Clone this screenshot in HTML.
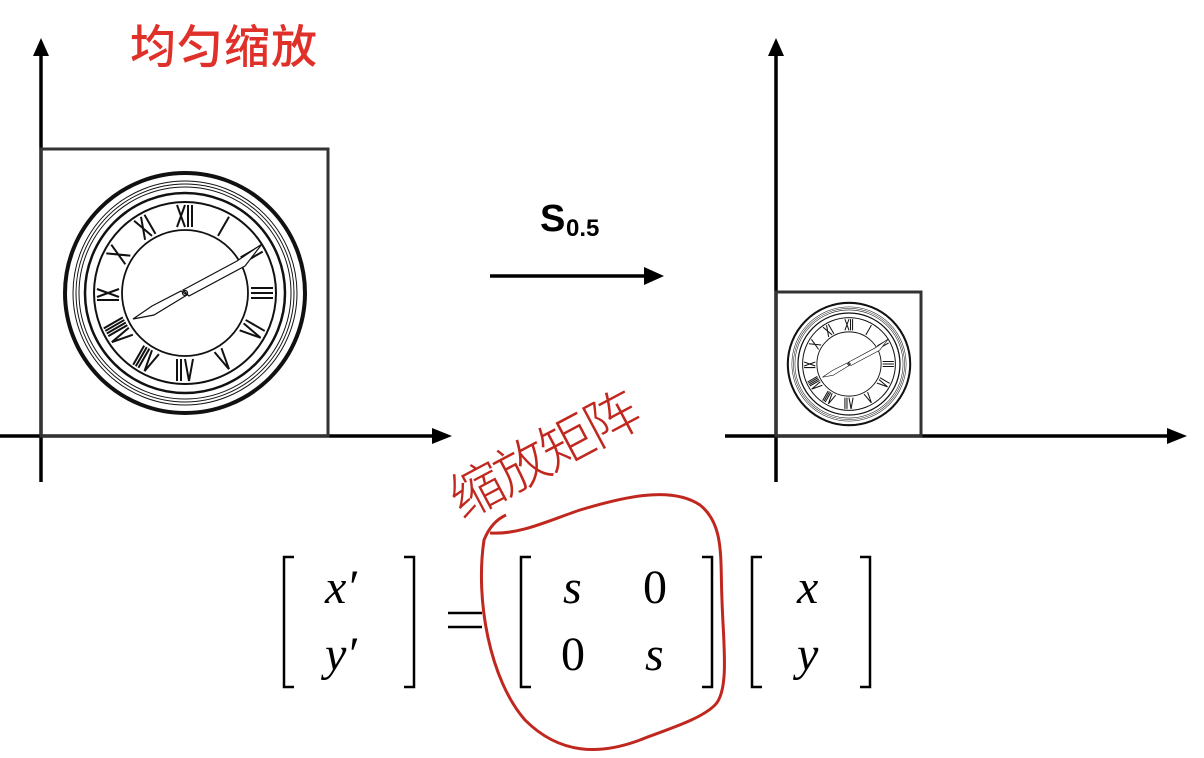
<!DOCTYPE html>
<html><head><meta charset="utf-8"><style>
html,body{margin:0;padding:0;background:#fff;width:1204px;height:758px;overflow:hidden}
svg{display:block}
</style></head><body>
<svg width="1204" height="758" viewBox="0 0 1204 758" xmlns="http://www.w3.org/2000/svg">
<defs>
<g id="clock" fill="none" stroke="#111">
<circle r="120" stroke-width="4"/>
<circle r="112" stroke-width="1"/>
<circle r="109" stroke-width="1"/>
<circle r="106" stroke-width="1"/>
<circle r="100" stroke-width="2.5"/>
<circle r="91" stroke-width="2"/>
<circle r="63" stroke-width="1.8"/>
<g stroke-width="2">
<g transform="rotate(0)"><path d="M-8,-66L0,-88M0,-66L-8,-88M3,-66L3,-88M7,-66L7,-88"/></g>
<g transform="rotate(30)"><path d="M0,-66L0,-88"/></g>
<g transform="rotate(60)"><path d="M-3,-66L-3,-88M3,-66L3,-88"/></g>
<g transform="rotate(90)"><path d="M-5,-66L-5,-88M0,-66L0,-88M5,-66L5,-88"/></g>
<g transform="rotate(120)"><path d="M-7,-66L-7,-88M-3,-66L1,-88M5,-66L1,-88"/></g>
<g transform="rotate(150)"><path d="M-4,-66L0,-88M4,-66L0,-88"/></g>
<g transform="rotate(180)"><path d="M-8,-66L-4,-88M0,-66L-4,-88M4,-66L4,-88M8,-66L8,-88"/></g>
<g transform="rotate(210)"><path d="M-8,-66L-4,-88M0,-66L-4,-88M3,-66L3,-88M6,-66L6,-88M9,-66L9,-88"/></g>
<g transform="rotate(240)"><path d="M-10,-66L-6,-88M-2,-66L-6,-88M1,-66L1,-88M4,-66L4,-88M7,-66L7,-88M10,-66L10,-88"/></g>
<g transform="rotate(270)"><path d="M-7,-66L-7,-88M-4,-66L4,-88M4,-66L-4,-88"/></g>
<g transform="rotate(300)"><path d="M-5,-66L5,-88M5,-66L-5,-88"/></g>
<g transform="rotate(330)"><path d="M-8,-66L0,-88M0,-66L-8,-88M4,-66L4,-88"/></g>
</g>
<path d="M-52,26 L-33,13 L-4,-2 L2,2 L-31,22 Z" stroke-width="1.2" fill="#fff"/>
<path d="M-2,-3 L52,-32 L77,-49 L60,-27 L4,3 Z" stroke-width="1.2" fill="#fff"/>
<circle r="2.5" stroke-width="1.2"/>
</g>
</defs>
<g stroke="#000" stroke-width="3.5" fill="none">
<line x1="41" y1="52" x2="41" y2="482"/>
<line x1="0" y1="436" x2="436" y2="436"/>
<line x1="776" y1="52" x2="776" y2="482"/>
<line x1="725" y1="436" x2="1172" y2="436"/>
<line x1="490" y1="276" x2="648" y2="276"/>
</g>
<g fill="#000">
<polygon points="41,38 33,56 49,56"/>
<polygon points="452,436 432,428 432,444"/>
<polygon points="776,38 768,56 784,56"/>
<polygon points="1187,436 1167,428 1167,444"/>
<polygon points="664,276 644,267 644,285"/>
</g>
<rect x="41" y="149" width="287" height="287" fill="none" stroke="#333" stroke-width="3"/>
<rect x="776" y="292" width="145" height="144" fill="none" stroke="#333" stroke-width="3"/>
<use href="#clock" transform="translate(185,293)"/>
<use href="#clock" transform="translate(849,364) scale(0.51)"/>
<text x="540" y="231" font-family="Liberation Sans, sans-serif" font-weight="bold" font-size="38">S</text>
<text x="566" y="236" font-family="Liberation Sans, sans-serif" font-weight="bold" font-size="24">0.5</text>
<text x="130" y="63" fill="#e0302a" font-family="Liberation Sans, 'Noto Sans CJK SC', sans-serif" font-size="46" font-weight="500" letter-spacing="1">均匀缩放</text>
<text x="0" y="0" transform="translate(462,520) rotate(-28)" fill="#c0281f" font-family="'Noto Sans CJK SC', sans-serif" font-size="54" font-weight="300" letter-spacing="-3">缩放矩阵</text>
<g fill="none" stroke="#000" stroke-width="2.5">
<path d="M294,557 H284 V687 H294"/>
<path d="M404,557 H414 V687 H404"/>
<path d="M531,557 H521 V687 H531"/>
<path d="M702,557 H712 V687 H702"/>
<path d="M762,557 H752 V687 H762"/>
<path d="M860,557 H870 V687 H860"/>
<path d="M448,613 H482 M448,627 H482"/>
</g>
<g font-family="Liberation Serif, serif" font-size="48" fill="#000">
<text x="325" y="603" font-style="italic">x′</text>
<text x="325" y="670" font-style="italic">y′</text>
<text x="563" y="603" font-style="italic">s</text>
<text x="643" y="603">0</text>
<text x="561" y="670">0</text>
<text x="645" y="670" font-style="italic">s</text>
<text x="797" y="603" font-style="italic">x</text>
<text x="797" y="670" font-style="italic">y</text>
</g>
<path d="M506,515 C495,520 488,530 484,540 C475,600 490,680 525,720 C560,755 600,755 640,740 C665,730 700,720 715,705 C730,690 723,640 722,600 C720,560 725,525 700,505 C670,485 620,498 580,510 C550,520 520,535 490,533" fill="none" stroke="#c0281f" stroke-width="3"/>
</svg>
</body></html>
